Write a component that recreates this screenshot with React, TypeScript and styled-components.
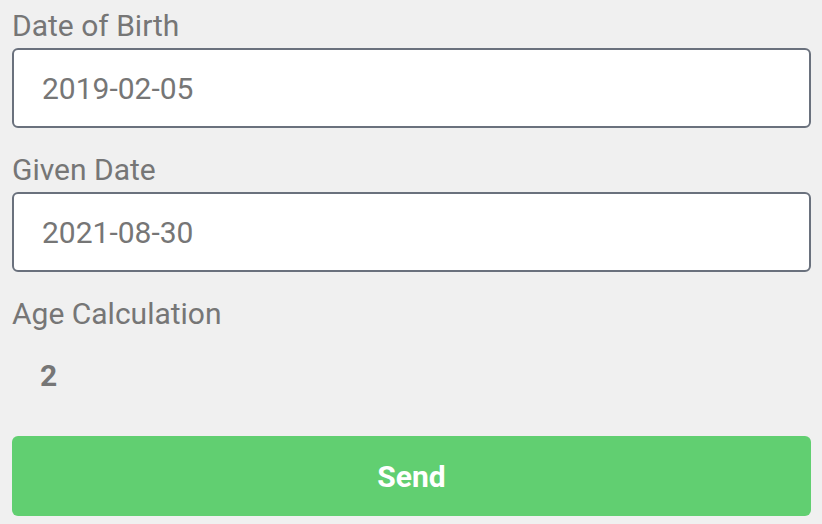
import React, { useState } from 'react';
import styled, { createGlobalStyle } from 'styled-components';

const GlobalStyle = createGlobalStyle`
  html, body {
    margin: 0;
    padding: 0;
    background: #f0f0f0;
  }
  body {
    font-family: Roboto, 'Liberation Sans', sans-serif;
  }
  * {
    box-sizing: border-box;
  }
`;

// 두 날짜 사이의 만 나이 계산
const calcAge = (birth: string, given: string) => {
  const b = new Date(birth);
  const g = new Date(given);
  let age = g.getFullYear() - b.getFullYear();
  const m = g.getMonth() - b.getMonth();
  if (m < 0 || (m === 0 && g.getDate() < b.getDate())) age--;
  return age;
};

const App = () => {
  const [birth, setBirth] = useState('2019-02-05');
  const [given, setGiven] = useState('2021-08-30');

  return (
    <>
      <GlobalStyle />
      <Form onSubmit={(e) => e.preventDefault()}>
        <Field>
          <Label>Date of Birth</Label>
          <Input value={birth} onChange={(e) => setBirth(e.target.value)} />
        </Field>
        <Field>
          <Label>Given Date</Label>
          <Input value={given} onChange={(e) => setGiven(e.target.value)} />
        </Field>
        <Label>Age Calculation</Label>
        <Result>{calcAge(birth, given)}</Result>
        <SendButton type="submit">Send</SendButton>
      </Form>
    </>
  );
};

export default App;

const Form = styled.form`
  display: flex;
  flex-direction: column;
  padding: 8px 11px 0 12px;
`;

const Field = styled.div`
  display: flex;
  flex-direction: column;
  gap: 4px;
  margin-bottom: 24px;
`;

const Label = styled.label`
  font-size: 30px;
  line-height: 36px;
  color: #767676;
`;

const Input = styled.input`
  height: 80px;
  width: 100%;
  background: #ffffff;
  border: 2px solid #6a717d;
  border-radius: 6px;
  padding: 0 0 0 28px;
  font-family: Roboto, 'Liberation Sans', sans-serif;
  font-size: 30px;
  color: #767676;
  outline: none;
`;

const Result = styled.div`
  margin: 26px 0 0;
  padding-left: 28px;
  font-size: 30px;
  line-height: 36px;
  font-weight: 700;
  color: #767676;
`;

const SendButton = styled.button`
  margin-top: 42px;
  height: 80px;
  width: 100%;
  border: none;
  border-radius: 6px;
  background: #61cf71;
  color: #ffffff;
  font-family: Roboto, 'Liberation Sans', sans-serif;
  font-size: 30px;
  font-weight: 700;
  cursor: pointer;
`;
